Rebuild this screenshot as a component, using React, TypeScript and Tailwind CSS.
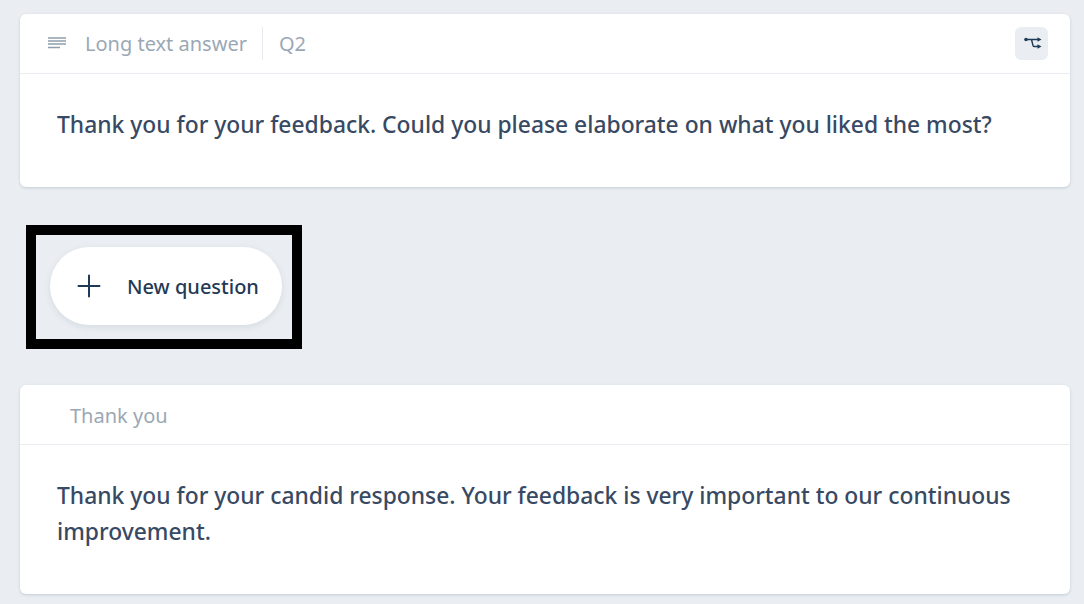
const font = "font-['Noto_Sans',sans-serif]"

function BranchIcon() {
  return (
    <svg width="18" height="14" viewBox="0 0 18 14" fill="none" className="ml-[2px] text-[#1f3a55]">
      <circle cx="2" cy="2.500" r="1.8" fill="currentColor" />
      <path d="M2 2.500h13M7.500 2.500 9 8.500c.2.700.6 1 1.400 1H15" stroke="currentColor" strokeWidth="1.4" />
      <path d="M13.500 .2 17.500 2.500l-4 2.300zM13.500 7.200 17.500 9.500l-4 2.300z" fill="currentColor" />
    </svg>
  )
}

function LinesIcon() {
  return (
    <svg width="18" height="13" viewBox="0 0 18 13" className="text-[#8f9eac]">
      <path d="M0 1h18M0 4h18M0 7h18M0 10.500h12" stroke="currentColor" strokeWidth="1.4" fill="none" />
    </svg>
  )
}

export default function App() {
  return (
    <div className={`${font} w-[1084px] h-[604px] overflow-hidden bg-[#eaeef2] pt-[14px] pl-5 pr-[14px]`}>
      <div className="h-[173px] rounded-md bg-white shadow-[0_1px_3px_rgba(60,80,110,0.22)]">
        <div className="flex h-[60px] items-center border-b border-[#e9edf1] pl-[28px] pr-[22px]">
          <LinesIcon />
          <span className="ml-[19px] text-[20px] text-[#9aa8b5]">Long text answer</span>
          <div className="ml-[15px] mr-4 h-[33px] w-px bg-[#e6eaee]" />
          <span className="text-[20px] text-[#9aa8b5]">Q2</span>
          <div className="ml-auto flex h-[33px] w-[33px] items-center justify-center rounded-md bg-[#eaeef2]">
            <BranchIcon />
          </div>
        </div>
        <p className="px-[37px] pt-[33px] text-[22.85px] leading-[36px] font-medium text-[#384963]">
          Thank you for your feedback. Could you please elaborate on what you liked the most?
        </p>
      </div>

      <div className="mt-[38px] ml-[6px] h-[124px] w-[276px] border-[10px] border-black pt-3 pl-[14px]">
        <button className="flex h-[78px] w-[232px] items-center rounded-full bg-white pl-[27px] shadow-[0_2px_6px_rgba(60,80,110,0.12)]">
          <svg width="24" height="24" viewBox="0 0 24 24" fill="none" stroke="#1f3a55" strokeWidth="2" strokeLinecap="round">
            <path d="M12 1.500v21M1.500 12h21" />
          </svg>
          <span className="ml-[26px] mt-[2px] text-[20px] font-medium text-[#1f3a55]">New question</span>
        </button>
      </div>

      <div className="mt-9 h-[209px] rounded-md bg-white shadow-[0_1px_3px_rgba(60,80,110,0.22)]">
        <div className="flex h-[60px] items-center border-b border-[#e9edf1] pl-[50px] pt-[2px]">
          <span className="text-[20px] text-[#9aa8b5]">Thank you</span>
        </div>
        <p className="px-[37px] pt-[33px] text-[22.85px] leading-[36px] font-medium text-[#384963]">
          Thank you for your candid response. Your feedback is very important to our continuous improvement.
        </p>
      </div>
    </div>
  )
}
